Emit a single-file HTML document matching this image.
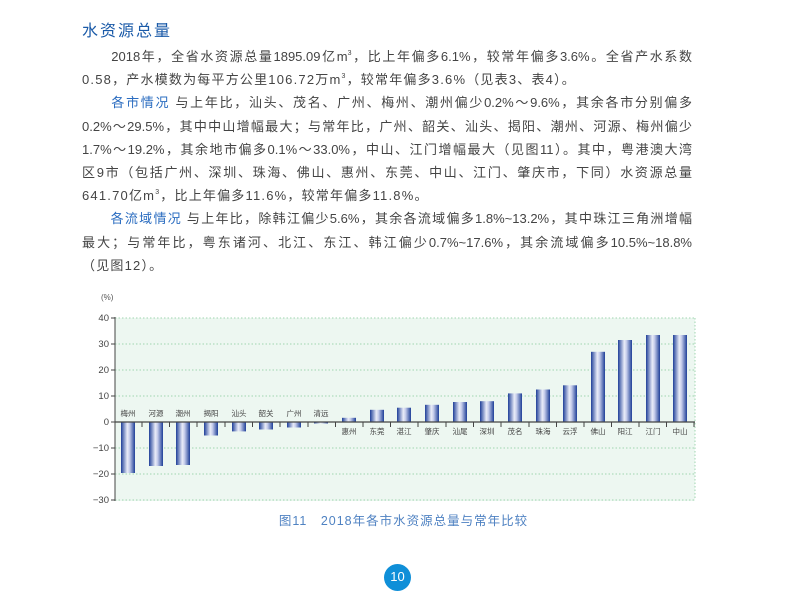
<!DOCTYPE html>
<html><head><meta charset="utf-8">
<style>
html,body{margin:0;padding:0;background:#fff;width:785px;height:603px;overflow:hidden;position:relative}
body{font-family:"Liberation Sans","Noto Sans CJK SC",sans-serif;color:#444}
.t{position:absolute;left:82px;top:17px;font-size:16px;color:#1a5aa8;letter-spacing:2px}
.txt{position:absolute;left:82px;top:45px;width:610px;font-size:13px;line-height:23.2px}
.l{display:block;text-align:justify;text-align-last:justify;white-space:nowrap;height:23.2px}
.l.e{text-align-last:left;letter-spacing:1.2px}
.b{color:#2a6cc0}
sup{font-size:7px;vertical-align:6px;line-height:0}
.cap{position:absolute;left:0;width:785px;text-align:center;top:510px;font-size:12.5px;color:#4f82c2;letter-spacing:1px;padding-left:22px;box-sizing:border-box}
.pn{position:absolute;left:384px;top:564px;width:27px;height:27px;border-radius:50%;background:#0f8fd8;color:#fff;font-size:13px;text-align:center;line-height:26px}
</style></head><body>
<div class="t">水资源总量</div>
<div class="txt">
<span class="l">　　2018年，全省水资源总量1895.09亿m<sup>3</sup>，比上年偏多6.1%，较常年偏多3.6%。全省产水系数</span>
<span class="l e">0.58，产水模数为每平方公里106.72万m<sup>3</sup>，较常年偏多3.6%（见表3、表4）。</span>
<span class="l">　　<span class="b">各市情况</span> 与上年比，汕头、茂名、广州、梅州、潮州偏少0.2%～9.6%，其余各市分别偏多</span>
<span class="l">0.2%～29.5%，其中中山增幅最大；与常年比，广州、韶关、汕头、揭阳、潮州、河源、梅州偏少</span>
<span class="l">1.7%～19.2%，其余地市偏多0.1%～33.0%，中山、江门增幅最大（见图11）。其中，粤港澳大湾</span>
<span class="l">区9市（包括广州、深圳、珠海、佛山、惠州、东莞、中山、江门、肇庆市，下同）水资源总量</span>
<span class="l e">641.70亿m<sup>3</sup>，比上年偏多11.6%，较常年偏多11.8%。</span>
<span class="l">　　<span class="b">各流域情况</span> 与上年比，除韩江偏少5.6%，其余各流域偏多1.8%~13.2%，其中珠江三角洲增幅</span>
<span class="l">最大；与常年比，粤东诸河、北江、东江、韩江偏少0.7%~17.6%，其余流域偏多10.5%~18.8%</span>
<span class="l e">（见图12）。</span>
</div>
<svg style="position:absolute;left:0;top:0" width="785" height="603" font-family="Liberation Sans,Noto Sans CJK SC,sans-serif">
<defs><linearGradient id="g" x1="0" x2="1" y1="0" y2="0">
<stop offset="0" stop-color="#1f3f98"/><stop offset="0.45" stop-color="#e9ecf8"/><stop offset="0.6" stop-color="#c9d0ec"/><stop offset="1" stop-color="#1f3f98"/></linearGradient></defs>
<rect x="115" y="318" width="580" height="183" fill="#edf7f1"/>
<g stroke="#9fd6b0" stroke-width="1" stroke-dasharray="1.5,2">
<line x1="115" y1="318" x2="695" y2="318"/><line x1="115" y1="344" x2="695" y2="344"/><line x1="115" y1="370" x2="695" y2="370"/><line x1="115" y1="396" x2="695" y2="396"/><line x1="115" y1="448" x2="695" y2="448"/><line x1="115" y1="474" x2="695" y2="474"/><line x1="115" y1="500" x2="695" y2="500"/><line x1="695" y1="318" x2="695" y2="500"/>
</g>
<line x1="115" y1="317" x2="115" y2="501" stroke="#444"/>
<g stroke="#444"><line x1="111" y1="318" x2="115" y2="318"/><line x1="111" y1="344" x2="115" y2="344"/><line x1="111" y1="370" x2="115" y2="370"/><line x1="111" y1="396" x2="115" y2="396"/><line x1="111" y1="422" x2="115" y2="422"/><line x1="111" y1="448" x2="115" y2="448"/><line x1="111" y1="474" x2="115" y2="474"/><line x1="111" y1="500" x2="115" y2="500"/></g>
<g font-size="9.5" fill="#444" text-anchor="end">
<text x="109" y="321">40</text><text x="109" y="347">30</text><text x="109" y="373">20</text><text x="109" y="399">10</text><text x="109" y="425">0</text><text x="109" y="451">−10</text><text x="109" y="477">−20</text><text x="109" y="503">−30</text></g>
<text x="101" y="300" font-size="8" fill="#555">(%)</text>
<g fill="url(#g)">
<rect x="121" y="422" width="14" height="51"/>
<rect x="149" y="422" width="14" height="44"/>
<rect x="176" y="422" width="14" height="43"/>
<rect x="204" y="422" width="14" height="13.5"/>
<rect x="232" y="422" width="14" height="9.4"/>
<rect x="259" y="422" width="14" height="7.5"/>
<rect x="287" y="422" width="14" height="5.5"/>
<rect x="314" y="422" width="14" height="1.5"/>
<rect x="342" y="417.8" width="14" height="4.2"/>
<rect x="370" y="409.8" width="14" height="12.2"/>
<rect x="397" y="407.7" width="14" height="14.3"/>
<rect x="425" y="404.8" width="14" height="17.2"/>
<rect x="453" y="402" width="14" height="20"/>
<rect x="480" y="401.2" width="14" height="20.8"/>
<rect x="508" y="393.4" width="14" height="28.6"/>
<rect x="536" y="389.5" width="14" height="32.5"/>
<rect x="563" y="385.3" width="14" height="36.7"/>
<rect x="591" y="351.8" width="14" height="70.2"/>
<rect x="618" y="340" width="14" height="82"/>
<rect x="646" y="335" width="14" height="87"/>
<rect x="673" y="335" width="14" height="87"/>
</g>
<line x1="115" y1="422" x2="695" y2="422" stroke="#444" stroke-width="1.3"/>
<g stroke="#444">
<line x1="142" y1="422" x2="142" y2="427"/><line x1="169.5" y1="422" x2="169.5" y2="427"/><line x1="197" y1="422" x2="197" y2="427"/><line x1="225" y1="422" x2="225" y2="427"/><line x1="252.5" y1="422" x2="252.5" y2="427"/><line x1="280" y1="422" x2="280" y2="427"/><line x1="308" y1="422" x2="308" y2="427"/><line x1="335.5" y1="422" x2="335.5" y2="427"/><line x1="363" y1="422" x2="363" y2="427"/><line x1="390.5" y1="422" x2="390.5" y2="427"/><line x1="418" y1="422" x2="418" y2="427"/><line x1="446" y1="422" x2="446" y2="427"/><line x1="473.5" y1="422" x2="473.5" y2="427"/><line x1="501" y1="422" x2="501" y2="427"/><line x1="529" y1="422" x2="529" y2="427"/><line x1="556.5" y1="422" x2="556.5" y2="427"/><line x1="584" y1="422" x2="584" y2="427"/><line x1="611.5" y1="422" x2="611.5" y2="427"/><line x1="639" y1="422" x2="639" y2="427"/><line x1="666.5" y1="422" x2="666.5" y2="427"/><line x1="694" y1="422" x2="694" y2="427"/>
</g>
<g font-size="7.5" fill="#444" text-anchor="middle">
<text x="128" y="416">梅州</text><text x="156" y="416">河源</text><text x="183" y="416">潮州</text><text x="211" y="416">揭阳</text><text x="239" y="416">汕头</text><text x="266" y="416">韶关</text><text x="294" y="416">广州</text><text x="321" y="416">清远</text>
<text x="349" y="434">惠州</text><text x="377" y="434">东莞</text><text x="404" y="434">湛江</text><text x="432" y="434">肇庆</text><text x="460" y="434">汕尾</text><text x="487" y="434">深圳</text><text x="515" y="434">茂名</text><text x="543" y="434">珠海</text><text x="570" y="434">云浮</text><text x="598" y="434">佛山</text><text x="625" y="434">阳江</text><text x="653" y="434">江门</text><text x="680" y="434">中山</text>
</g>
</svg>
<div class="cap">图11　2018年各市水资源总量与常年比较</div>
<div class="pn">10</div>
</body></html>
